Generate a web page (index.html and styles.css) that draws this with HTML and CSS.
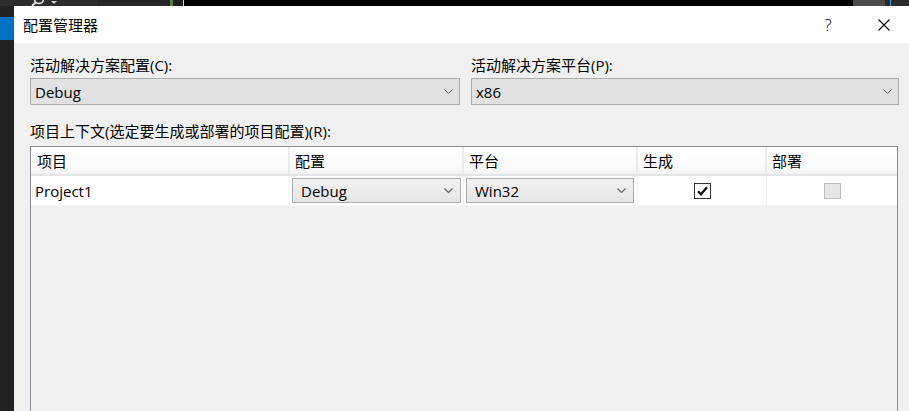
FILE: index.html
```html
<!DOCTYPE html>
<html lang="zh-CN">
<head>
<meta charset="utf-8">
<title>配置管理器</title>
<link rel="stylesheet" href="styles.css">
</head>
<body>
<div class="screen">
  <div class="topbar">
    <div class="tb-a">
      <svg class="tb-search" width="30" height="6" viewBox="0 0 30 6">
        <circle cx="9" cy="-1" r="4.5" fill="none" stroke="#e8e8e8" stroke-width="1.6"/>
        <line x1="5.5" y1="2.5" x2="2" y2="6" stroke="#e8e8e8" stroke-width="1.8"/>
        <polygon points="21,1 27,1 24,4" fill="#d0d0d0"/>
      </svg>
    </div>
    <div class="tb-b"></div>
    <div class="tb-green"></div>
    <div class="tb-c"></div>
    <div class="tb-white"></div>
    <div class="tb-black"></div>
    <div class="tb-gray"></div>
    <div class="tb-d"></div>
    <div class="tb-blue"></div>
    <div class="tb-icons">
      <svg width="18" height="6" viewBox="0 0 18 6">
        <rect x="2" y="1" width="5" height="5" fill="#ddd"/>
        <rect x="3.5" y="2.5" width="2" height="2" fill="#333"/>
        <rect x="9" y="1" width="8" height="1" fill="#ddd"/>
        <rect x="9" y="3" width="8" height="1" fill="#ddd"/>
        <rect x="9" y="5" width="8" height="1" fill="#ddd"/>
      </svg>
    </div>
  </div>
  <div class="main">
    <div class="side"><div class="side-blue"></div></div>
    <div class="dialog">
      <div class="titlebar">
        <span class="title">配置管理器</span>
        <div class="caption-buttons">
          <span class="help">?</span>
          <svg class="close" width="12" height="12" viewBox="0 0 12 12">
            <path d="M0.5 0.5 L11.5 11.5 M11.5 0.5 L0.5 11.5" stroke="#000" stroke-width="1.1" fill="none"/>
          </svg>
        </div>
      </div>
      <div class="content">
        <div class="top-fields">
          <div class="field">
            <div class="label">活动解决方案配置(C):</div>
            <div class="select">
              <span>Debug</span>
              <svg class="chev" width="9" height="5" viewBox="0 0 9 5"><path d="M0.5 0.5 L4.5 4.5 L8.5 0.5" fill="none" stroke="#555" stroke-width="1"/></svg>
            </div>
          </div>
          <div class="field">
            <div class="label">活动解决方案平台(P):</div>
            <div class="select">
              <span>x86</span>
              <svg class="chev" width="9" height="5" viewBox="0 0 9 5"><path d="M0.5 0.5 L4.5 4.5 L8.5 0.5" fill="none" stroke="#555" stroke-width="1"/></svg>
            </div>
          </div>
        </div>
        <div class="label label-ctx">项目上下文(选定要生成或部署的项目配置)(R):</div>
        <div class="grid">
          <div class="grid-row header">
            <div class="hcell">项目</div>
            <div class="hcell">配置</div>
            <div class="hcell">平台</div>
            <div class="hcell">生成</div>
            <div class="hcell">部署</div>
          </div>
          <div class="grid-row data">
            <div class="dcell name">Project1</div>
            <div class="dcell combo-cell">
              <div class="combo">
                <span>Debug</span>
                <svg class="chev" width="9" height="5" viewBox="0 0 9 5"><path d="M0.5 0.5 L4.5 4.5 L8.5 0.5" fill="none" stroke="#666" stroke-width="1.2"/></svg>
              </div>
            </div>
            <div class="dcell combo-cell combo-cell-r">
              <div class="combo">
                <span>Win32</span>
                <svg class="chev" width="9" height="5" viewBox="0 0 9 5"><path d="M0.5 0.5 L4.5 4.5 L8.5 0.5" fill="none" stroke="#666" stroke-width="1.2"/></svg>
              </div>
            </div>
            <div class="dcell check-cell">
              <div class="checkbox checked">
                <svg width="15" height="14" viewBox="0 0 15 14"><path d="M3 7.2 L6 10.2 L12 3.2" fill="none" stroke="#111" stroke-width="2.3"/></svg>
              </div>
            </div>
            <div class="dcell check-cell">
              <div class="checkbox disabled"></div>
            </div>
          </div>
        </div>
      </div>
    </div>
  </div>
</div>
</body>
</html>
```
FILE: styles.css
```css
html, body {
  margin: 0;
  padding: 0;
}
body {
  width: 909px;
  height: 411px;
  overflow: hidden;
  font-family: "Open Sans", "Noto Sans CJK SC", sans-serif;
  font-size: 15px;
  color: #000;
  background: #1e1e1e;
}
.screen {
  display: flex;
  flex-direction: column;
  height: 411px;
}
.topbar {
  height: 6px;
  flex: none;
  display: flex;
  background: #000;
  overflow: hidden;
}
.tb-a { width: 97px; background: #2d2d30; display: flex; }
.tb-search { margin-left: 30px; }
.tb-b { width: 73px; background: #262628; }
.tb-green { width: 3px; background: #5b7a3c; }
.tb-c { width: 10px; background: #1f1f1f; }
.tb-white { width: 1px; background: #cfcfcf; }
.tb-black { flex: 1; background: #000; }
.tb-gray { width: 32px; background: #4b4b4b; }
.tb-d { width: 5px; background: #2a2a2a; }
.tb-blue { width: 1px; background: #3d9be0; }
.tb-icons { width: 18px; background: #2d2d30; }

.main {
  flex: 1;
  display: flex;
  min-height: 0;
}
.side {
  width: 14px;
  flex: none;
  background: #222;
}
.side-blue {
  margin-top: 11px;
  height: 23px;
  background: #0072c6;
}
.dialog {
  flex: 1;
  display: flex;
  flex-direction: column;
  background: #f0f0f0;
  min-width: 0;
  min-height: 0;
}
.titlebar {
  height: 37px;
  flex: none;
  background: #fff;
  display: flex;
  align-items: center;
  padding: 0 19px 0 9px;
}
.title {
  flex: 1;
  line-height: 20px;
  font-family: "Noto Sans CJK SC", sans-serif;
}
.caption-buttons {
  display: flex;
  align-items: center;
  gap: 46px;
}
.help {
  font-family: "Open Sans", sans-serif;
  font-size: 17px;
  font-weight: 300;
  line-height: 16px;
  width: 8px;
  text-align: center;
}
.close {
  display: block;
}
.content {
  flex: 1;
  min-height: 0;
  display: flex;
  flex-direction: column;
  padding: 12px 10px 0 16px;
}
.top-fields {
  display: grid;
  grid-template-columns: 430px 428px;
  column-gap: 11px;
}
.label {
  line-height: 20px;
  white-space: nowrap;
}
.select {
  margin-top: 3px;
  height: 27px;
  box-sizing: border-box;
  border: 1px solid #adadad;
  background: #e1e1e1;
  display: flex;
  align-items: center;
  justify-content: space-between;
  padding: 0 6px 0 4px;
}
.chev { display: block; }
.label-ctx {
  margin-top: 16px;
  line-height: 21px;
}
.grid {
  margin-top: 4px;
  width: 868px;
  flex: 1;
  min-height: 0;
  box-sizing: border-box;
  border: 1px solid #8a8d93;
  border-bottom: none;
  background: #f0f0f0;
}
.grid-row {
  display: grid;
  grid-template-columns: 259px 174px 174px 129px 130px;
}
.header {
  height: 29px;
  box-sizing: border-box;
  background: linear-gradient(#ffffff, #fbfbfb 70%, #f3f3f3);
  border-bottom: 2px solid #e4e5e7;
}
.hcell {
  display: flex;
  align-items: center;
  padding-left: 6px;
  border-right: 2px solid #ebebeb;
  line-height: 20px;
}
.hcell + .hcell { padding-left: 5px; }
.hcell:last-child { border-right: none; }
.data {
  height: 30px;
  background: #fff;
  box-sizing: border-box;
  border-bottom: 1px solid #f4f4f4;
}
.dcell {
  border-right: 1px solid #f0f0f0;
  display: flex;
  align-items: center;
}
.dcell:last-child { border-right: none; }
.name {
  padding-left: 4px;
}
.combo-cell {
  padding: 2px;
  align-items: flex-start;
}
.combo-cell-r { padding-right: 3px; }
.combo {
  flex: 1;
  height: 25px;
  box-sizing: border-box;
  border: 1px solid #acacac;
  background: linear-gradient(#f1f1f1, #e6e6e6);
  display: flex;
  align-items: center;
  justify-content: space-between;
  padding: 0 7px 0 8px;
}
.check-cell {
  justify-content: center;
}
.checkbox {
  width: 17px;
  height: 16px;
  box-sizing: border-box;
  display: flex;
  align-items: center;
  justify-content: center;
}
.checked {
  border: 1px solid #333;
  background: #fff;
}
.disabled {
  border: 1px solid #bcbcbc;
  background: #e6e6e6;
}
```
